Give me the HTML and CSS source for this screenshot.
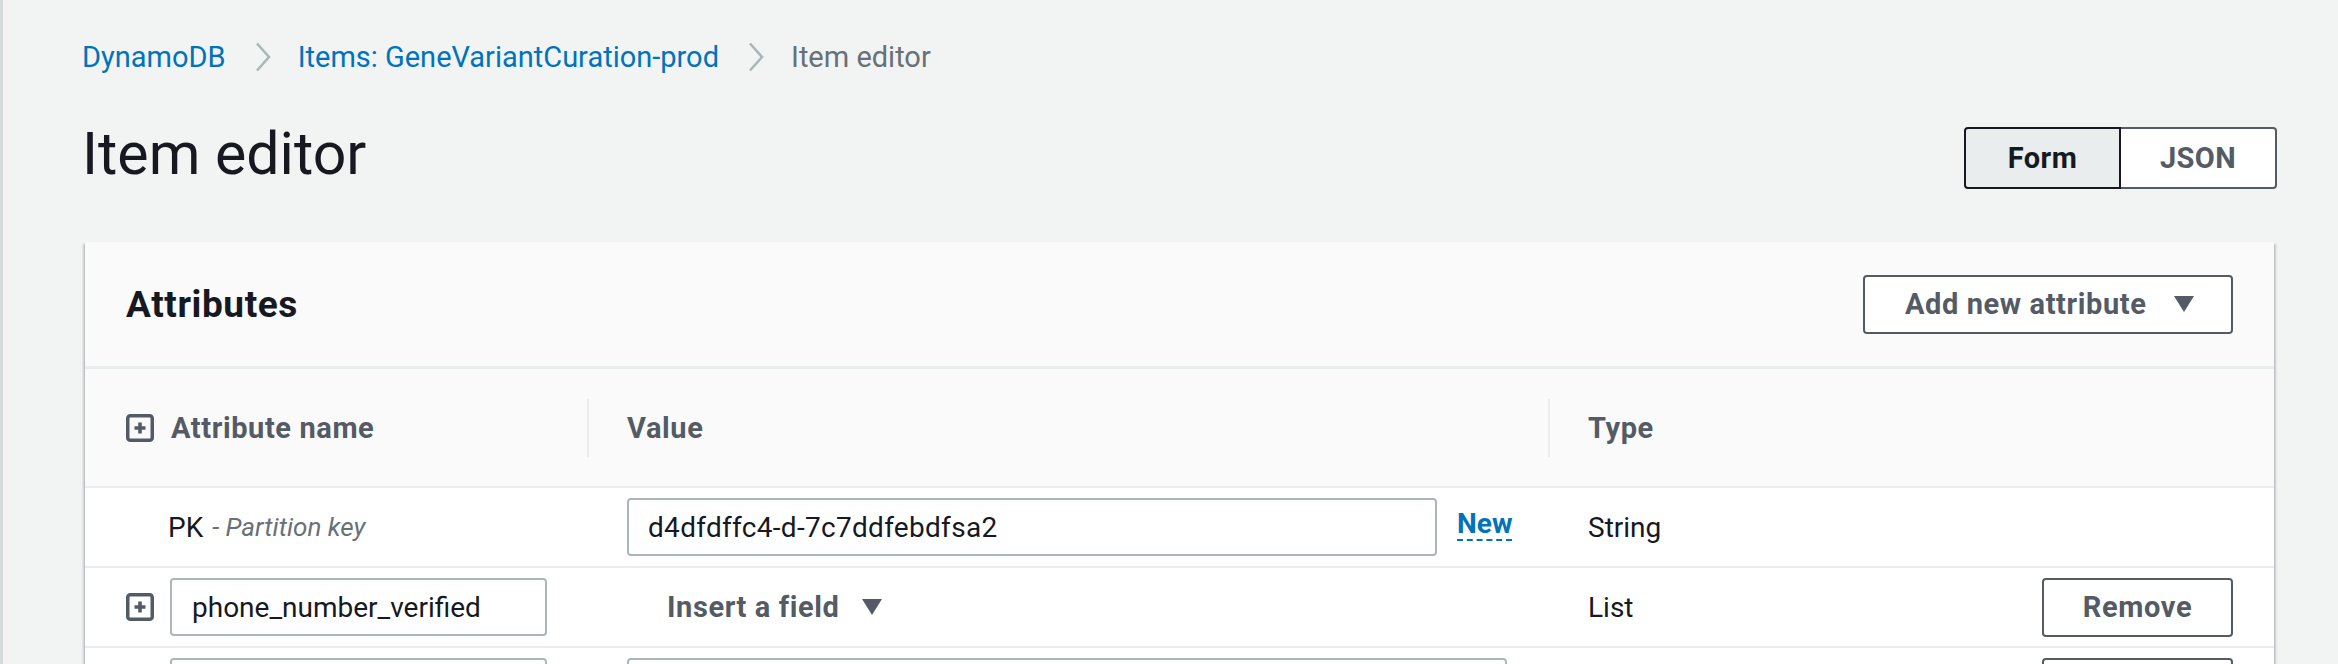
FILE: index.html
```html
<!DOCTYPE html>
<html lang="en">
<head>
<meta charset="utf-8">
<title>Item editor</title>
<link rel="stylesheet" href="styles.css">
</head>
<body>
<div class="page">
  <nav class="crumbs">
    <a class="crumb link">DynamoDB</a>
    <svg class="chev" width="16" height="30" viewBox="0 0 16 30"><path d="M2 1.5 L14 15 L2 28.5" fill="none" stroke="#aab7b8" stroke-width="2.6"/></svg>
    <a class="crumb link">Items: GeneVariantCuration-prod</a>
    <svg class="chev" width="16" height="30" viewBox="0 0 16 30"><path d="M2 1.5 L14 15 L2 28.5" fill="none" stroke="#aab7b8" stroke-width="2.6"/></svg>
    <span class="crumb current">Item editor</span>
  </nav>

  <div class="title-row">
    <h1 class="title">Item editor</h1>
    <div class="seg">
      <button class="seg-btn seg-active">Form</button>
      <button class="seg-btn seg-idle">JSON</button>
    </div>
  </div>

  <section class="card">
    <header class="card-head">
      <h2 class="card-title">Attributes</h2>
      <button class="btn btn-drop">Add new attribute
        <svg class="caret" width="20" height="16" viewBox="0 0 20 16"><path d="M0 0H20L10 16Z" fill="#545b64"/></svg>
      </button>
    </header>

    <div class="table">
      <div class="row row-head">
        <div class="cell c1">
          <svg class="plus" width="28" height="28" viewBox="0 0 28 28"><rect x="1.75" y="1.75" width="24.5" height="24.5" rx="2.5" fill="none" stroke="#545b64" stroke-width="3.5"/><path d="M14 8.5V19.5M8.5 14H19.5" stroke="#545b64" stroke-width="3.6"/></svg>
          <span class="th">Attribute name</span>
        </div>
        <div class="cell c2"><span class="divider"></span><span class="th">Value</span></div>
        <div class="cell c3"><span class="divider"></span><span class="th">Type</span></div>
      </div>

      <div class="row">
        <div class="cell c1 key-cell"><span class="key">PK</span><span class="key-note">- Partition key</span></div>
        <div class="cell c2">
          <input class="inp inp-value" type="text" value="d4dfdffc4-d-7c7ddfebdfsa2">
          <a class="new-link">New</a>
        </div>
        <div class="cell c3"><span class="type">String</span></div>
      </div>

      <div class="row">
        <div class="cell c1">
          <svg class="plus" width="28" height="28" viewBox="0 0 28 28"><rect x="1.75" y="1.75" width="24.5" height="24.5" rx="2.5" fill="none" stroke="#545b64" stroke-width="3.5"/><path d="M14 8.5V19.5M8.5 14H19.5" stroke="#545b64" stroke-width="3.6"/></svg>
          <input class="inp inp-name" type="text" value="phone_number_verified">
        </div>
        <div class="cell c2 insert-cell">
          <span class="insert">Insert a field</span>
          <svg class="caret" width="20" height="16" viewBox="0 0 20 16"><path d="M0 0H20L10 16Z" fill="#545b64"/></svg>
        </div>
        <div class="cell c3 type-cell"><span class="type">List</span><button class="btn btn-remove">Remove</button></div>
      </div>

      <div class="row">
        <div class="cell c1">
          <span class="plus-space"></span>
          <input class="inp inp-name" type="text" value="">
        </div>
        <div class="cell c2">
          <input class="inp inp-value inp-wide" type="text" value="">
        </div>
        <div class="cell c3 type-cell"><span class="type"></span><button class="btn btn-remove">Remove</button></div>
      </div>
    </div>
  </section>
</div>
</body>
</html>
```

FILE: styles.css
```css
* {
  box-sizing: border-box;
}

html,
body {
  margin: 0;
  padding: 0;
}

body {
  background: #f2f3f3;
  border-left: 3px solid #d5dbdb;
  height: 664px;
  overflow: hidden;
  font-family: Roboto, "Liberation Sans", Arial, sans-serif;
  font-size: 28px;
  color: #16191f;
}

.page {
  padding: 37px 61px 0 79px;
}

/* breadcrumbs */
.crumbs {
  display: flex;
  align-items: center;
  height: 40px;
  line-height: 40px;
}

.crumb {
  font-size: 29px;
  white-space: nowrap;
}

.link {
  color: #0073bb;
}

.current {
  color: #687078;
}

.chev {
  margin: 0 27px 0 29px;
  flex: none;
}

/* title row */
.title-row {
  display: flex;
  justify-content: space-between;
  align-items: flex-start;
  margin-top: 50px;
  height: 62px;
}

.title {
  margin: 0;
  font-size: 59px;
  font-weight: 400;
  line-height: 54px;
  color: #16191f;
}

.seg {
  display: flex;
}

.seg-btn {
  height: 62px;
  font-family: Roboto, "Liberation Sans", Arial, sans-serif;
  font-size: 29px;
  font-weight: 700;
  letter-spacing: 0.4px;
  padding: 0;
  cursor: pointer;
}

.seg-active {
  width: 157px;
  background: #eaeded;
  color: #16191f;
  border: 2px solid #16191f;
  border-radius: 4px 0 0 4px;
}

.seg-idle {
  width: 156px;
  background: #ffffff;
  color: #545b64;
  border: 2px solid #545b64;
  border-left: none;
  border-radius: 0 4px 4px 0;
}

/* card */
.card {
  margin: 53px 3px 0 3px;
  background: #ffffff;
  box-shadow: 0 2px 2px 0 rgba(0, 28, 36, 0.3), 2px 2px 2px 0 rgba(0, 28, 36, 0.15), -2px 2px 2px 0 rgba(0, 28, 36, 0.15);
}

.card-head {
  height: 127px;
  display: flex;
  align-items: center;
  justify-content: space-between;
  padding: 0 41px;
  background: #fafafa;
  border-bottom: 3px solid #eaeded;
}

.card-title {
  margin: 0;
  font-size: 37px;
  font-weight: 700;
  letter-spacing: 0.6px;
  color: #16191f;
}

.btn {
  background: #ffffff;
  border: 2px solid #545b64;
  border-radius: 4px;
  color: #545b64;
  font-family: Roboto, "Liberation Sans", Arial, sans-serif;
  font-size: 29px;
  font-weight: 700;
  letter-spacing: 0.6px;
  cursor: pointer;
}

.btn-drop {
  width: 370px;
  height: 59px;
  display: flex;
  align-items: center;
  justify-content: space-between;
  padding: 0 37px 0 40px;
}

/* table */
.row {
  display: grid;
  grid-template-columns: 502px 961px 1fr;
  height: 80px;
  border-bottom: 2px solid #eaeded;
}

.row-head {
  height: 119px;
  background: #fafafa;
}

.cell {
  display: flex;
  align-items: center;
}

.c1 {
  padding-left: 41px;
}

.c2,
.c3 {
  padding-left: 40px;
}

.c3 {
  padding-right: 41px;
}

.row-head .c2,
.row-head .c3 {
  padding-left: 0;
}

.divider {
  width: 2px;
  height: 58px;
  background: #eaeded;
  margin-right: 38px;
}

.th {
  font-size: 29px;
  font-weight: 700;
  letter-spacing: 0.6px;
  color: #545b64;
}

.plus {
  flex: none;
  margin-right: 16px;
}

.row-head .plus {
  margin-right: 17px;
}

.plus-space {
  width: 28px;
  margin-right: 16px;
  flex: none;
}

.key-cell {
  padding-left: 83px;
}

.key {
  color: #16191f;
}

.key-note {
  margin-left: 9px;
  font-size: 26px;
  font-style: italic;
  color: #687078;
}

.inp {
  height: 58px;
  border: 2px solid #aab7b8;
  border-radius: 4px;
  background: #ffffff;
  font-family: Roboto, "Liberation Sans", Arial, sans-serif;
  font-size: 28px;
  color: #16191f;
  outline: none;
}

.inp-name {
  width: 377px;
  padding: 0 20px;
}

.inp-value {
  width: 810px;
  padding: 0 19px;
  letter-spacing: 0.3px;
}

.inp-wide {
  width: 880px;
}

.new-link {
  margin-left: 20px;
  font-weight: 700;
  color: #0073bb;
  line-height: 30px;
  border-bottom: 2px dashed #0073bb;
  margin-bottom: 4px;
}

.insert-cell {
  padding-left: 80px;
}

.insert {
  font-size: 29px;
  font-weight: 700;
  letter-spacing: 0.6px;
  color: #545b64;
  margin-right: 22px;
}

.type {
  color: #16191f;
}

.type-cell {
  justify-content: space-between;
}

.btn-remove {
  width: 191px;
  height: 59px;
  padding: 0;
}
```
